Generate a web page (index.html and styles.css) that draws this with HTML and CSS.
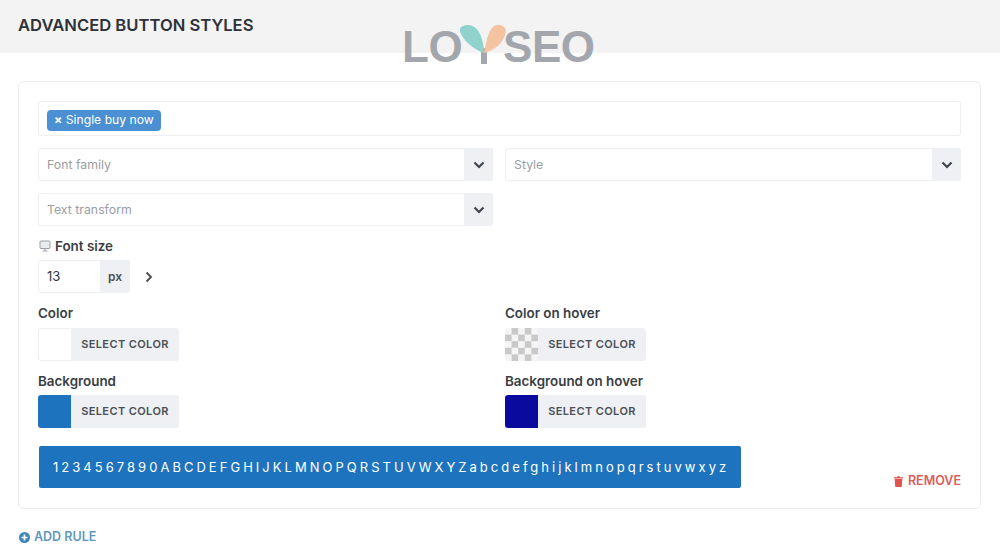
FILE: index.html
```html
<!DOCTYPE html>
<html lang="en">
<head>
<meta charset="utf-8">
<title>Advanced button styles</title>
<link rel="stylesheet" href="styles.css">
</head>
<body>
<header class="page-head"><h1>ADVANCED BUTTON STYLES</h1></header>
<div class="logo">
  <span>LO</span>
  <svg class="logo-y" width="50" height="40" viewBox="0 0 50 40" aria-hidden="true">
    <rect x="23" y="24" width="6" height="16" fill="#a3a7ad"/>
    <path d="M3 3C9-1 17 1 21 8C24 14 26 20 26 29C20 27 12 22 7 16C4 12 0 7 3 3Z" fill="#8fd3cc"/>
    <path d="M47 4C43 0 38 0 35 3C30 8 28 18 26 29C33 27 40 23 44 17C47 12 49 7 47 4Z" fill="#f3c3a2"/>
  </svg>
  <span>SEO</span>
</div>
<main class="card">
  <div class="tag-input"><span class="tag"><b>×</b> Single buy now</span></div>
  <div class="two-col row-select">
    <div class="select"><span>Font family</span><i class="chev"><svg width="12" height="8" viewBox="0 0 12 8"><path d="M1.5 1.5 6 6l4.5-4.5" fill="none" stroke="#3f4450" stroke-width="2.2"/></svg></i></div>
    <div class="select"><span>Style</span><i class="chev"><svg width="12" height="8" viewBox="0 0 12 8"><path d="M1.5 1.5 6 6l4.5-4.5" fill="none" stroke="#3f4450" stroke-width="2.2"/></svg></i></div>
  </div>
  <div class="two-col row-select">
    <div class="select"><span>Text transform</span><i class="chev"><svg width="12" height="8" viewBox="0 0 12 8"><path d="M1.5 1.5 6 6l4.5-4.5" fill="none" stroke="#3f4450" stroke-width="2.2"/></svg></i></div>
    <div></div>
  </div>
  <label class="label size-label">
    <svg width="12" height="12" viewBox="0 0 12 12"><rect x="1" y="1" width="10" height="7.5" rx="1" fill="#e9ebee" stroke="#9a9ea4"/><path d="M6 8.5V11M3.5 11h5" stroke="#9a9ea4"/></svg>
    Font size
  </label>
  <div class="size-row">
    <div class="number"><span class="num">13</span><span class="unit">px</span></div>
    <svg class="size-chev" width="8" height="12" viewBox="0 0 8 12"><path d="M1.5 1.5 6 6l-4.5 4.5" fill="none" stroke="#4a4e55" stroke-width="1.9"/></svg>
  </div>
  <div class="two-col color-row">
    <div>
      <div class="label">Color</div>
      <div class="picker"><span class="swatch white"></span><span class="pick-btn">SELECT COLOR</span></div>
    </div>
    <div>
      <div class="label">Color on hover</div>
      <div class="picker"><span class="swatch checker"></span><span class="pick-btn">SELECT COLOR</span></div>
    </div>
  </div>
  <div class="two-col color-row second">
    <div>
      <div class="label">Background</div>
      <div class="picker"><span class="swatch blue"></span><span class="pick-btn">SELECT COLOR</span></div>
    </div>
    <div>
      <div class="label">Background on hover</div>
      <div class="picker"><span class="swatch navy"></span><span class="pick-btn">SELECT COLOR</span></div>
    </div>
  </div>
  <div class="preview-row">
    <button class="preview">1234567890ABCDEFGHIJKLMNOPQRSTUVWXYZabcdefghijklmnopqrstuvwxyz</button>
    <a class="remove">
      <svg width="9" height="11" viewBox="0 0 9 11"><path d="M0 1.2h3L3.4.2h2.2L6 1.2h3v1.2H0ZM.7 3h7.6l-.6 8H1.3Z" fill="#e0524c"/></svg>
      REMOVE
    </a>
  </div>
</main>
<a class="add-rule">
  <svg width="11" height="11" viewBox="0 0 11 11"><circle cx="5.5" cy="5.5" r="5.5" fill="#3f86b8"/><path d="M5.5 2.5v6M2.5 5.5h6" stroke="#fff" stroke-width="1.7"/></svg>
  ADD RULE
</a>
</body>
</html>
```

FILE: styles.css
```css
* { box-sizing: border-box; }
html, body { margin: 0; padding: 0; }
body {
  position: relative;
  width: 1000px;
  height: 559px;
  overflow: hidden;
  background: #fff;
  font-family: Inter, "Liberation Sans", sans-serif;
  color: #33373d;
}
.page-head {
  height: 53px;
  background: #f3f3f3;
  padding: 16px 18px 0;
}
.page-head h1 {
  margin: 0;
  font-size: 16.6px;
  line-height: 18px;
  font-weight: 600;
  color: #2d3138;
}
.logo {
  position: absolute;
  left: 402px;
  top: 26px;
  display: flex;
  align-items: center;
  height: 41px;
  font-family: "Liberation Sans", sans-serif;
  font-weight: 700;
  font-size: 44px;
  line-height: 41px;
  letter-spacing: -.5px;
  color: #a3a7ad;
}
.logo-y { margin: -6px -5px 0 -4px; flex: none; }
.card {
  margin: 28px 19px 0 18px;
  height: 428px;
  border: 1px solid #ececec;
  border-radius: 6px;
  padding: 19px 19px 0 19px;
}
.tag-input {
  height: 35px;
  border: 1px solid #eeeeee;
  border-radius: 3px;
  padding: 6px 8px;
}
.tag {
  display: inline-block;
  height: 21px;
  padding: 0 7px;
  background: #4a90d2;
  border-radius: 4px;
  color: #fff;
  font-size: 12.2px;
  line-height: 20px;
}
.tag b { font-weight: 700; margin-right: 0; }
.two-col {
  display: grid;
  grid-template-columns: 455px 456px;
  column-gap: 12px;
}
.row-select { margin-top: 12px; }
.row-select + .row-select { margin-top: 12px; }
.select {
  display: flex;
  align-items: center;
  justify-content: space-between;
  height: 33px;
  border: 1px solid #eeeeee;
  border-radius: 3px;
  padding-left: 8px;
  font-size: 12.3px;
  color: #9b9ea3;
}
.chev {
  display: flex;
  align-items: center;
  justify-content: center;
  width: 29px;
  height: 33px;
  margin: -1px -1px -1px 0;
  background: #eef0f4;
  border-radius: 0 3px 3px 0;
}
.label {
  font-size: 13.4px;
  line-height: 16px;
  font-weight: 600;
  color: #3a3e44;
}
.size-label {
  display: flex;
  align-items: center;
  gap: 4px;
  margin-top: 12px;
  padding-left: 1px;
}
.size-row {
  display: flex;
  align-items: center;
  margin-top: 6px;
}
.number {
  display: flex;
  width: 92px;
  height: 33px;
  border: 1px solid #eeeeee;
  border-radius: 3px;
  font-size: 13px;
  line-height: 31px;
}
.num { flex: 1; padding-left: 8px; }
.unit {
  width: 30px;
  margin: -1px -1px -1px 0;
  line-height: 33px;
  background: #eef0f4;
  text-align: center;
  font-size: 12px;
  font-weight: 600;
  color: #4a4e55;
  border-radius: 0 3px 3px 0;
}
.size-chev { margin-left: 15px; }
.color-row { margin-top: 12px; }
.picker {
  display: flex;
  width: 141px;
  height: 33px;
  margin-top: 7px;
}
.second .picker { margin-top: 6px; }
.swatch {
  width: 33px;
  height: 33px;
  border-radius: 3px 0 0 3px;
  flex: none;
}
.white { border: 1px solid #eeeeee; border-right: 0; background: #fff; }
.blue { background: #1e73be; }
.navy { background: #0a0a9e; }
.checker {
  background-color: #fff;
  background-image: conic-gradient(#c9c9c9 25%, #f5f5f5 0 50%, #c9c9c9 0 75%, #f5f5f5 0);
  background-size: 13.2px 13.2px;
}
.pick-btn {
  flex: 1;
  background: #eef0f4;
  border-radius: 0 3px 3px 0;
  text-align: center;
  font-size: 11px;
  line-height: 33px;
  font-weight: 600;
  letter-spacing: .4px;
  color: #4a4e55;
}
.preview-row {
  display: flex;
  justify-content: space-between;
  align-items: flex-end;
  margin-top: 18px;
  padding-left: 1px;
}
.preview {
  width: 702px;
  height: 42px;
  border: 0;
  border-radius: 2px;
  padding: 0 0 0 14px;
  background: #1e73be;
  color: #fff;
  font-family: Inter, "Liberation Sans", sans-serif;
  font-size: 13px;
  letter-spacing: 3.03px;
  text-align: left;
  white-space: nowrap;
  overflow: hidden;
}
.remove {
  display: flex;
  align-items: center;
  gap: 5px;
  font-size: 12.5px;
  line-height: 14px;
  font-weight: 600;
  color: #d9605a;
}
.add-rule {
  display: flex;
  align-items: center;
  gap: 4px;
  margin: 21px 0 0 19px;
  font-size: 12.5px;
  line-height: 14px;
  font-weight: 600;
  color: #5f97bf;
}
```
